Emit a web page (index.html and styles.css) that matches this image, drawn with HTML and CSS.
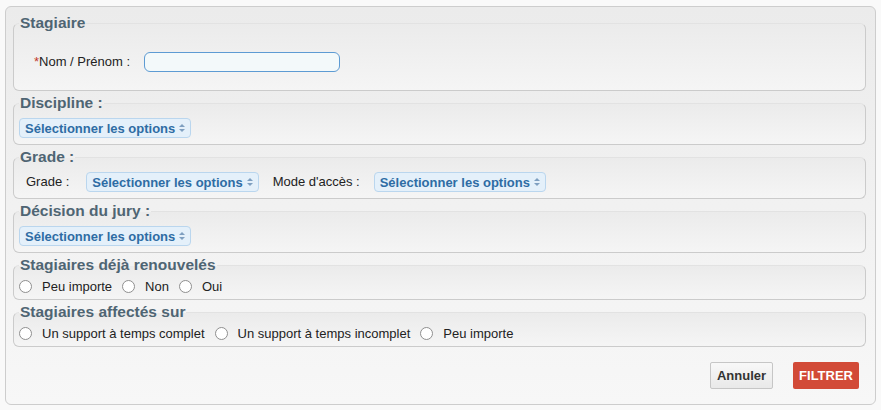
FILE: index.html
```html
<!DOCTYPE html>
<html lang="fr">
<head>
  <meta charset="UTF-8">
  <title>Filtre stagiaires</title>
  <link rel="stylesheet" href="styles.css">
</head>
<body>

  <form class="panel" id="filterForm">

    <fieldset class="group">
      <legend>Stagiaire</legend>
      <div class="name-row">
        <label class="lbl"><span class="req">*</span>Nom / Prénom :</label>
        <input type="text" name="nom" class="text-input">
      </div>
    </fieldset>

    <fieldset class="group">
      <legend>Discipline :</legend>
      <div class="select-row">
        <button type="button" class="multi">Sélectionner les options<span class="arrows"></span></button>
      </div>
    </fieldset>

    <fieldset class="group">
      <legend>Grade :</legend>
      <div class="select-row grade-row">
        <label class="lbl">Grade :</label>
        <button type="button" class="multi">Sélectionner les options<span class="arrows"></span></button>
        <label class="lbl lbl-mode">Mode d'accès :</label>
        <button type="button" class="multi">Sélectionner les options<span class="arrows"></span></button>
      </div>
    </fieldset>

    <fieldset class="group">
      <legend>Décision du jury :</legend>
      <div class="select-row">
        <button type="button" class="multi">Sélectionner les options<span class="arrows"></span></button>
      </div>
    </fieldset>

    <fieldset class="group group-radio">
      <legend>Stagiaires déjà renouvelés</legend>
      <div class="radio-row">
        <label class="radio"><input type="radio" name="renouv" value="any">Peu importe</label>
        <label class="radio"><input type="radio" name="renouv" value="non">Non</label>
        <label class="radio"><input type="radio" name="renouv" value="oui">Oui</label>
      </div>
    </fieldset>

    <fieldset class="group group-radio">
      <legend>Stagiaires affectés sur</legend>
      <div class="radio-row">
        <label class="radio"><input type="radio" name="support" value="complet">Un support à temps complet</label>
        <label class="radio"><input type="radio" name="support" value="incomplet">Un support à temps incomplet</label>
        <label class="radio"><input type="radio" name="support" value="any">Peu importe</label>
      </div>
    </fieldset>

    <div class="actions">
      <button type="reset" class="btn btn-cancel">Annuler</button>
      <button type="submit" class="btn btn-submit">FILTRER</button>
    </div>

  </form>

</body>
</html>
```

FILE: styles.css
```css
body {
  margin: 0;
  padding: 6px 5px 0 5px;
  background: #f9f9f9;
  font-family: "Liberation Sans", Arial, sans-serif;
  font-size: 13px;
  color: #222;
}
.panel {
  width: 871px;
  box-sizing: border-box;
  padding: 7px 9px 15px 7px;
  border: 1px solid #cdcdcd;
  border-radius: 6px;
  background: linear-gradient(#ebebeb, #f7f7f7);
}
.group {
  margin: 0 0 3px;
  padding: 0 5px 6px;
  min-width: 0;
  border: 1px solid #cbcbcb;
  border-top-color: #e2e2e2;
  border-radius: 6px;
  background: linear-gradient(#ebebeb, #f5f5f5);
}
.group legend {
  padding: 0 1px;
  font-size: 15.5px;
  font-weight: bold;
  line-height: 18px;
  color: #4f6573;
}
.group-radio {
  padding-bottom: 4px;
}
.lbl {
  line-height: 20px;
}
.req {
  color: #c0392b;
}
.name-row {
  display: flex;
  align-items: center;
  padding: 20px 0 12px 15px;
}
.name-row .lbl {
  margin-right: 14px;
}
.text-input {
  width: 196px;
  height: 20px;
  box-sizing: border-box;
  margin: 0;
  border: 1px solid #5d9bd3;
  border-radius: 6px;
  background: #f3f9fa;
}
.select-row {
  display: flex;
  align-items: center;
  margin-top: 6px;
}
.grade-row {
  padding-left: 7px;
}
.grade-row .lbl {
  margin-right: 17px;
}
.grade-row .lbl-mode {
  margin-right: 14px;
}
.grade-row .multi {
  margin-right: 14px;
}
.multi {
  display: inline-flex;
  align-items: center;
  height: 20px;
  box-sizing: border-box;
  margin: 0;
  padding: 0 5px 0 5px;
  border: 1px solid #bad6ee;
  border-radius: 4px;
  background: #e4f0fa;
  color: #2e6ca4;
  font-family: inherit;
  font-size: 13px;
  font-weight: bold;
}
.arrows {
  position: relative;
  width: 6px;
  height: 8px;
  margin-left: 4px;
}
.arrows::before,
.arrows::after {
  content: "";
  position: absolute;
  left: 0;
  border-left: 3px solid transparent;
  border-right: 3px solid transparent;
}
.arrows::before {
  top: 0;
  border-bottom: 3px solid #7f9fc0;
}
.arrows::after {
  bottom: 0;
  border-top: 3px solid #7f9fc0;
}
.radio-row {
  display: flex;
  align-items: center;
  margin-top: 4px;
  height: 17px;
}
.radio {
  display: flex;
  align-items: center;
  margin-right: 10px;
}
.radio input {
  appearance: none;
  width: 13px;
  height: 13px;
  margin: 0 10px 0 0;
  border: 1px solid #8f8f8f;
  border-radius: 50%;
  background: #fff;
}
.actions {
  display: flex;
  justify-content: flex-end;
  gap: 20px;
  margin: 15px 7px 0 0;
}
.btn {
  height: 27px;
  margin: 0;
  border-radius: 2px;
  font-family: inherit;
  font-size: 13px;
  font-weight: bold;
  cursor: pointer;
}
.btn-cancel {
  padding: 0 6px;
  border: 1px solid #c6c6c6;
  background: linear-gradient(#f8f8f8, #e9e9e9);
  color: #333;
}
.btn-submit {
  padding: 0 6px;
  border: none;
  background: #d24a37;
  color: #fff;
}
```
